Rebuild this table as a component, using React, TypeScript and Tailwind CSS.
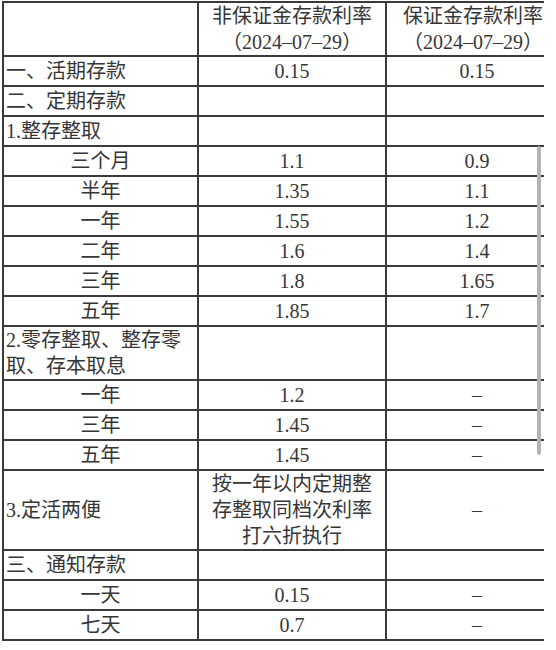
import React from 'react';

type Row = {
  label: string[];
  indent?: boolean;
  a?: string[];
  b?: string[];
};

const rows: Row[] = [
  { label: ['一、活期存款'], a: ['0.15'], b: ['0.15'] },
  { label: ['二、定期存款'] },
  { label: ['1.整存整取'] },
  { label: ['三个月'], indent: true, a: ['1.1'], b: ['0.9'] },
  { label: ['半年'], indent: true, a: ['1.35'], b: ['1.1'] },
  { label: ['一年'], indent: true, a: ['1.55'], b: ['1.2'] },
  { label: ['二年'], indent: true, a: ['1.6'], b: ['1.4'] },
  { label: ['三年'], indent: true, a: ['1.8'], b: ['1.65'] },
  { label: ['五年'], indent: true, a: ['1.85'], b: ['1.7'] },
  { label: ['2.零存整取、整存零', '取、存本取息'] },
  { label: ['一年'], indent: true, a: ['1.2'], b: ['–'] },
  { label: ['三年'], indent: true, a: ['1.45'], b: ['–'] },
  { label: ['五年'], indent: true, a: ['1.45'], b: ['–'] },
  { label: ['3.定活两便'], a: ['按一年以内定期整', '存整取同档次利率', '打六折执行'], b: ['–'] },
  { label: ['三、通知存款'] },
  { label: ['一天'], indent: true, a: ['0.15'], b: ['–'] },
  { label: ['七天'], indent: true, a: ['0.7'], b: ['–'] },
];

function Lines({ lines }: { lines?: string[] }) {
  if (!lines) return null;
  return (
    <div>
      {lines.map((l, i) => (
        <span key={i} className="block whitespace-nowrap">
          {l}
        </span>
      ))}
    </div>
  );
}

export default function App() {
  const cell = 'min-h-[30px] border-r-2 border-b-2 border-[#3a3a3a] flex items-center';

  return (
    <div className="relative w-[556px] h-[650px] bg-white overflow-hidden">
      <div className="w-[544px] overflow-hidden pl-[2px] pt-[1px]">
        <div
          className="grid grid-cols-[195px_188px_182px] w-[565px] border-l-2 border-t-2 border-[#3a3a3a] text-[20px] leading-[26px] text-[#363636]"
          style={{ fontFamily: '"Liberation Serif", "Noto Sans CJK SC", serif' }}
        >
          {/* header */}
          <div className={cell} />
          <div className={`${cell} justify-center text-center`}>
            <Lines lines={['非保证金存款利率', '（2024–07–29）']} />
          </div>
          <div className={`${cell} justify-start text-center pl-[16px]`}>
            <Lines lines={['保证金存款利率', '（2024–07–29）']} />
          </div>

          {rows.map((r, i) => (
            <React.Fragment key={i}>
              <div className={`${cell} ${r.indent ? 'justify-center text-center' : 'pl-[2px]'}`}>
                <Lines lines={r.label} />
              </div>
              <div className={`${cell} justify-center text-center`}>
                <Lines lines={r.a} />
              </div>
              <div className={`${cell} justify-center text-center`}>
                <Lines lines={r.b} />
              </div>
            </React.Fragment>
          ))}
        </div>
      </div>

      {/* scroll indicator */}
      <div className="absolute left-[537px] top-[146px] w-[4px] h-[309px] rounded-full bg-[#b4b4b4]" />
    </div>
  );
}
